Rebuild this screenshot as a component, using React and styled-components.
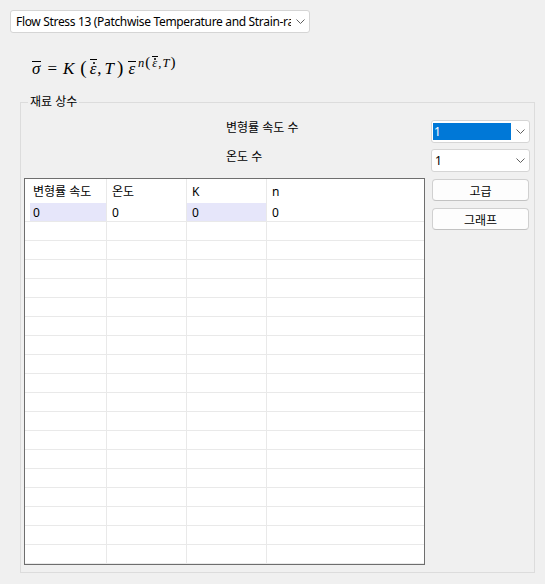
import React from "react";
import styled, { createGlobalStyle } from "styled-components";

const GlobalStyle = createGlobalStyle`
  html, body {
    margin: 0;
    background: #f0f0f0;
  }
  body {
    font-family: "Noto Sans", "Noto Sans CJK KR", sans-serif;
    font-size: 12px;
    color: #000;
  }
`;

const Page = styled.div`
  width: 545px;
  height: 584px;
  box-sizing: border-box;
  padding: 10px 0 0 10px;
  overflow: hidden;
`;

const Combo = styled.div`
  box-sizing: border-box;
  width: ${(p) => p.$width}px;
  height: 23px;
  display: flex;
  align-items: center;
  background: #fff;
  border: 1px solid #d5d5d5;
  border-radius: 3px;
  padding-left: ${(p) => p.$pad ?? 4}px;
`;

const ComboText = styled.span`
  flex: 1;
  min-width: 0;
  overflow: hidden;
  white-space: nowrap;
  line-height: 17px;
  height: 17px;
  padding-left: 1px;
  font-size: ${(p) => p.$size ?? 12}px;
  letter-spacing: ${(p) => p.$track ?? 0}px;
  color: ${(p) => (p.$selected ? "#fff" : "#000")};
  background: ${(p) => (p.$selected ? "#0078d7" : "transparent")};
`;

const Chevron = styled.span`
  width: 18px;
  flex: none;
  display: flex;
  justify-content: center;
  align-items: center;
`;

const Arrow = () => (
  <Chevron>
    <svg width="9" height="5" viewBox="0 0 9 5">
      <polyline points="0.5,0.5 4.5,4.5 8.5,0.5" fill="none" stroke="#5f5f5f" strokeWidth="1" />
    </svg>
  </Chevron>
);

/* math line: sigma-bar = K(eps-dot-bar, T) eps-bar ^ n(eps-dot-bar, T) */
const Formula = styled.div`
  margin: 20px 0 0 21px;
  height: 30px;
  font-family: "Liberation Serif", "DejaVu Serif", serif;
  font-size: 17px;
  line-height: 30px;
  white-space: nowrap;
`;

const Var = styled.i`
  font-style: italic;
  margin-left: ${(p) => p.$l ?? 0}px;
  margin-right: ${(p) => p.$r ?? 0}px;
`;

// letter with an overline and optional dot drawn above it
const Accent = styled.i`
  position: relative;
  display: inline-block;
  font-style: italic;
  line-height: 1;
  padding: 0 1px;
  margin-left: ${(p) => p.$l ?? 0}px;
  margin-right: ${(p) => p.$r ?? 0}px;
  &::before {
    content: "";
    position: absolute;
    left: 1px;
    right: 0;
    top: ${(p) => p.$bar}px;
    border-top: 1px solid #000;
  }
  &::after {
    content: ${(p) => (p.$dot != null ? '""' : "none")};
    position: absolute;
    left: calc(50% - 0.5px);
    top: ${(p) => p.$dot}px;
    width: 2px;
    height: 2px;
    border-radius: 50%;
    background: #000;
  }
`;

const Op = styled.span`
  margin: 0 ${(p) => p.$gap ?? 0}px;
`;

const Paren = styled.span`
  font-size: ${(p) => p.$size}px;
  margin: 0 ${(p) => p.$m ?? 1}px;
`;

const Sup = styled.span`
  display: inline-block;
  font-size: 12.5px;
  vertical-align: 7px;
  line-height: 1;
  margin-left: 1px;
`;

const Group = styled.div`
  position: relative;
  box-sizing: border-box;
  width: 515px;
  height: 471px;
  margin: 19px 0 0 10px;
  border: 1px solid #dcdcdc;
  padding: 17px 0 0 3px;
  display: grid;
  grid-template-columns: 401px 99px;
  grid-template-rows: 23px 23px auto;
  column-gap: 6px;
  row-gap: 6px;
`;

const GroupTitle = styled.span`
  position: absolute;
  top: -9px;
  left: 7px;
  padding: 0 2px;
  background: #f0f0f0;
  line-height: 16px;
`;

const FieldLabel = styled.span`
  padding-left: 202px;
  line-height: 15px;
`;

const Table = styled.div`
  box-sizing: border-box;
  width: 401px;
  height: 387px;
  border: 1px solid #6e6e6e;
  background: #fff;
  overflow: hidden;
`;

const Row = styled.div`
  display: grid;
  grid-template-columns: 5px 77px 80px 80px 1fr;
  height: ${(p) => (p.$head ? 24 : 18)}px;
  border-bottom: ${(p) => (p.$head ? "none" : "1px solid #e9e9e9")};
`;

const Cell = styled.div`
  display: flex;
  align-items: center;
  padding-left: ${(p) => p.$pad}px;
  border-right: ${(p) => (p.$last ? "none" : "1px solid #e9e9e9")};
  background: ${(p) => (p.$hl ? "#e6e6fa" : "#fff")};
  white-space: nowrap;
  overflow: hidden;
`;

const Strip = styled.div``;

const Side = styled.div`
  display: flex;
  flex-direction: column;
  gap: 7px;
  padding: 1px 0 0 1px;
`;

const Button = styled.button`
  box-sizing: border-box;
  width: 97px;
  height: 22px;
  padding: 0;
  font-family: "Noto Sans CJK KR", sans-serif;
  font-size: 12px;
  color: #000;
  background: #fdfdfd;
  border: 1px solid #d0d0d0;
  border-bottom-color: #c2c2c2;
  border-radius: 4px;
`;

const columns = [
  { title: "변형률 속도", pad: 3, hl: true },
  { title: "온도", pad: 5 },
  { title: "K", pad: 5, hl: true },
  { title: "n", pad: 5, last: true },
];

const emptyRows = Array.from({ length: 18 });

export default function App() {
  return (
    <Page>
      <GlobalStyle />
      <Combo $width={300}>
        <ComboText $size={12} $track={-0.33}>
          Flow Stress 13 (Patchwise Temperature and Strain-rate Dependent)
        </ComboText>
        <Arrow />
      </Combo>

      <Formula>
        <Accent $bar={1}>σ</Accent>
        <Op $gap={6}>=</Op>
        <Var $r={4}>K</Var>
        <Paren $size={19} $m={2}>(</Paren>
        <Accent $bar={-1} $dot={2}>ε</Accent>
        <Op>,</Op>
        <Var $l={3} $r={2}>T</Var>
        <Paren $size={19}>)</Paren>
        <Accent $bar={1} $l={3} $r={1}>ε</Accent>
        <Sup>
          <Var>n</Var>
          <Paren $size={15} $m={1}>(</Paren>
          <Accent $bar={-1} $dot={1}>ε</Accent>
          <Op>,</Op>
          <Var $l={1} $r={1}>T</Var>
          <Paren $size={15} $m={0}>)</Paren>
        </Sup>
      </Formula>

      <Group>
        <GroupTitle>재료 상수</GroupTitle>

        <FieldLabel>변형률 속도 수</FieldLabel>
        <Combo $width={99} $pad={1}>
          <ComboText $selected>1</ComboText>
          <Arrow />
        </Combo>

        <FieldLabel>온도 수</FieldLabel>
        <Combo $width={99} $pad={2}>
          <ComboText>1</ComboText>
          <Arrow />
        </Combo>

        <Table>
          <Row $head>
            <Strip />
            {columns.map((c) => (
              <Cell key={c.title} $pad={c.pad} $last={c.last}>
                {c.title}
              </Cell>
            ))}
          </Row>
          <Row>
            <Strip />
            {columns.map((c) => (
              <Cell key={c.title} $pad={c.pad} $hl={c.hl} $last={c.last}>
                0
              </Cell>
            ))}
          </Row>
          {emptyRows.map((_, i) => (
            <Row key={i}>
              <Strip />
              {columns.map((c) => (
                <Cell key={c.title} $pad={c.pad} $last={c.last} />
              ))}
            </Row>
          ))}
        </Table>

        <Side>
          <Button>고급</Button>
          <Button>그래프</Button>
        </Side>
      </Group>
    </Page>
  );
}
